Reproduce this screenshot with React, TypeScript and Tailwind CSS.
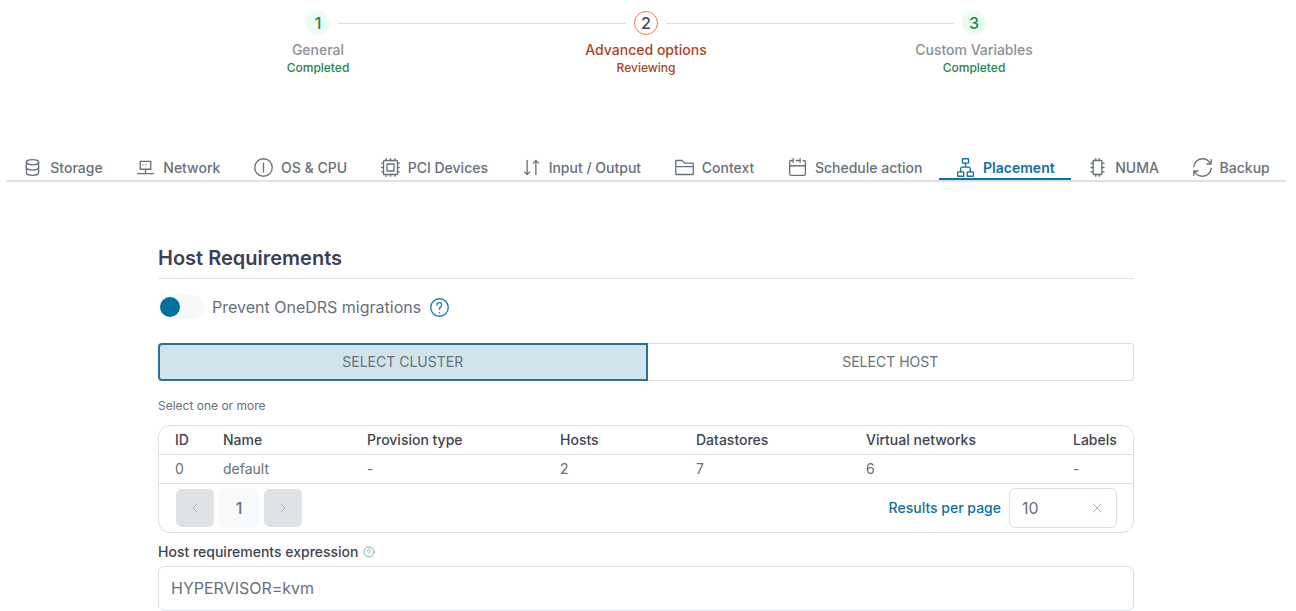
import { clsx } from "clsx";
import { ReactNode, useState } from "react";

const Icon = ({ className, children }: { className?: string; children: ReactNode }) => (
  <svg
    viewBox="0 0 24 24"
    fill="none"
    stroke="currentColor"
    strokeWidth={1.5}
    strokeLinecap="round"
    strokeLinejoin="round"
    aria-hidden="true"
    className={clsx("shrink-0", className)}
  >
    {children}
  </svg>
);

const HelpIcon = ({ className }: { className?: string }) => (
  <Icon className={className}>
    <circle cx="12" cy="12" r="10" />
    <path d="M9 9C9 5.5 14.5 5.5 14.5 9C14.5 11.5 12 11 12 14" />
    <path d="M12 18.01L12.01 17.999" />
  </Icon>
);

const steps = [
  { id: 1, label: "General", status: "Completed" },
  { id: 2, label: "Advanced options", status: "Reviewing" },
  { id: 3, label: "Custom Variables", status: "Completed" },
];

const tabs = [
  {
    id: "storage",
    label: "Storage",
    icon: (
      <>
        <path d="M5 12V18C5 18 5 21 12 21C19 21 19 18 19 18V12" />
        <path d="M5 6V12C5 12 5 15 12 15C19 15 19 12 19 12V6" />
        <path d="M12 3C19 3 19 6 19 6C19 6 19 9 12 9C5 9 5 6 5 6C5 6 5 3 12 3Z" />
      </>
    ),
  },
  {
    id: "network",
    label: "Network",
    icon: (
      <>
        <path d="M3 19H21M12 19V14M6 5H18V14H6Z" />
        <path d="M9 9.01L9.01 8.999M12.5 9.01L12.51 8.999" />
      </>
    ),
  },
  {
    id: "booting",
    label: "OS & CPU",
    icon: (
      <>
        <circle cx="12" cy="12" r="10" />
        <path d="M12 7V17" />
      </>
    ),
  },
  {
    id: "pci",
    label: "PCI Devices",
    icon: (
      <>
        <path d="M8 8H16V16H8Z" />
        <rect x="4" y="4" width="16" height="16" rx="1" />
        <path d="M7 2V4M12 2V4M17 2V4M7 20V22M12 20V22M17 20V22" />
        <path d="M2 7H4M2 12H4M2 17H4M20 7H22M20 12H22M20 17H22" />
      </>
    ),
  },
  {
    id: "io",
    label: "Input / Output",
    icon: (
      <>
        <path d="M17 20V4M17 4L20 7M17 4L14 7" />
        <path d="M7 4V20M7 20L10 17M7 20L4 17" />
      </>
    ),
  },
  {
    id: "context",
    label: "Context",
    icon: (
      <path d="M2 11V4.6C2 4.27 2.27 4 2.6 4H8.78C8.92 4 9.06 4.05 9.17 4.14L12.33 6.86C12.44 6.95 12.58 7 12.72 7H21.4C21.73 7 22 7.27 22 7.6V11M2 11V19.4C2 19.73 2.27 20 2.6 20H21.4C21.73 20 22 19.73 22 19.4V11M2 11H22" />
    ),
  },
  {
    id: "schedule",
    label: "Schedule action",
    icon: (
      <path d="M15 4V2M15 4V6M15 4H10.5M3 10V19C3 20.1 3.9 21 5 21H19C20.1 21 21 20.1 21 19V10H3ZM3 10V6C3 4.9 3.9 4 5 4H7M7 2V6M21 10V6C21 4.9 20.1 4 19 4H18.5" />
    ),
  },
  {
    id: "placement",
    label: "Placement",
    icon: (
      <>
        <rect x="8.5" y="2" width="7" height="5" rx=".6" />
        <rect x="3" y="17" width="7" height="5" rx=".6" />
        <rect x="14" y="17" width="7" height="5" rx=".6" />
        <path d="M6.5 17V13.5C6.5 12.4 7.4 11.5 8.5 11.5H15.5C16.6 11.5 17.5 12.4 17.5 13.5V17M12 11.5V7" />
      </>
    ),
  },
  {
    id: "numa",
    label: "NUMA",
    icon: (
      <>
        <rect x="7" y="4" width="10" height="16" rx=".6" />
        <path d="M10 2V4M14 2V4M10 20V22M14 20V22" />
        <path d="M4.5 7H7M4.5 12H7M4.5 17H7M17 7H19.5M17 12H19.5M17 17H19.5" />
      </>
    ),
  },
  {
    id: "backup",
    label: "Backup",
    icon: (
      <>
        <path d="M21.17 8C19.62 4.47 16.1 2 12 2C6.81 2 2.55 5.95 2.05 11M17 8H21.4C21.73 8 22 7.73 22 7.4V3" />
        <path d="M2.88 16C4.42 19.53 7.95 22 12.05 22C17.23 22 21.5 18.05 22 13M7.05 16H2.65C2.32 16 2.05 16.27 2.05 16.6V21" />
      </>
    ),
  },
];

const columns = [
  { label: "ID", width: "w-[48px]" },
  { label: "Name", width: "w-[144px]" },
  { label: "Provision type", width: "w-[193px]" },
  { label: "Hosts", width: "w-[136px]" },
  { label: "Datastores", width: "w-[170px]" },
  { label: "Virtual networks", width: "w-[207px]" },
  { label: "Labels", width: "w-[76px]" },
];

const clusters = [["0", "default", "-", "2", "7", "6", "-"]];

const Stepper = () => (
  <ol className="mx-auto flex w-full max-w-[984px]">
    {steps.map(({ id, label, status }, index) => {
      const active = status === "Reviewing";
      return (
        <li key={id} className="relative flex flex-1 flex-col items-center font-medium">
          {index > 0 && (
            <span className="absolute top-3 right-[calc(50%+20px)] left-[calc(-50%+20px)] h-px bg-[#dcdfe3]" />
          )}
          <span
            className={clsx(
              "flex size-6 items-center justify-center rounded-full text-base",
              active ? "border border-[#f9734a] text-[#40444f]" : "bg-[#e9fdf2] text-[#22854a]"
            )}
          >
            {id}
          </span>
          <span
            className={clsx(
              "mt-[5px] text-sm leading-5",
              active ? "text-[#ad4420]" : "text-[#8c9196]"
            )}
          >
            {label}
          </span>
          <span className={clsx("text-xs", active ? "text-[#ad4420]" : "text-[#22854a]")}>
            {status}
          </span>
        </li>
      );
    })}
  </ol>
);

const HostRequirements = () => {
  const [target, setTarget] = useState("cluster");
  const [preventMigrations, setPreventMigrations] = useState(false);
  const [expression, setExpression] = useState("HYPERVISOR=kvm");

  return (
    <section className="mx-auto w-full max-w-[976px]">
      <h2 className="border-b border-[#dcdfe3] pb-1.5 text-xl leading-7 font-semibold text-[#3e3e58]">
        Host Requirements
      </h2>

      <div className="mt-4 flex items-center gap-2">
        <label className="flex cursor-pointer items-center gap-2">
          <input
            type="checkbox"
            className="peer sr-only"
            checked={preventMigrations}
            onChange={(e) => setPreventMigrations(e.target.checked)}
          />
          <span className="flex h-6 w-[46px] items-center rounded-full bg-[#f6f8f9] px-0.5 peer-checked:justify-end">
            <span className="size-5 rounded-full bg-[#00719c]" />
          </span>
          <span>Prevent OneDRS migrations</span>
        </label>
        <button type="button" aria-label="Help" className="text-[#1b7ba6]">
          <HelpIcon className="size-[21px]" />
        </button>
      </div>

      <div className="mt-6 flex h-[38px] text-sm">
        {["cluster", "host"].map((item) => (
          <button
            key={item}
            type="button"
            aria-pressed={target === item}
            onClick={() => setTarget(item)}
            className={clsx(
              "flex-1 uppercase first:rounded-l last:rounded-r last:border-l-0",
              target === item ? "border-2 border-[#2a6f97] bg-[#d0e4eb]" : "border border-[#dcdfe3]"
            )}
          >
            Select {item}
          </button>
        ))}
      </div>

      <p className="mt-4 text-xs leading-[18px]">Select one or more</p>

      <div className="mt-[10px] rounded-xl border border-[#dcdfe3]">
        <table className="w-full table-fixed text-left text-sm">
          <thead className="text-[#3f4450]">
            <tr className="h-7 border-b border-[#dcdfe3]">
              {columns.map(({ label, width }) => (
                <th key={label} className={clsx("pl-4 font-medium whitespace-nowrap", width)}>
                  {label}
                </th>
              ))}
            </tr>
          </thead>
          <tbody>
            {clusters.map((row) => (
              <tr key={row[0]} className="h-[29px] border-b border-[#dcdfe3]">
                {row.map((cell, index) => (
                  <td key={index} className="pl-4">
                    {cell}
                  </td>
                ))}
              </tr>
            ))}
          </tbody>
        </table>

        <div className="flex items-center justify-between px-4 py-1">
          <nav aria-label="Pagination" className="flex gap-1">
            <button
              type="button"
              disabled
              aria-label="Previous page"
              className="flex size-10 items-center justify-center rounded-md border border-white bg-[#dfe3e6] bg-clip-padding text-[#a9aeb3]"
            >
              <Icon className="size-4">
                <path d="M15 6L9 12L15 18" />
              </Icon>
            </button>
            <button type="button" className="size-10 rounded-md bg-[#f8f9fa] font-medium">
              1
            </button>
            <button
              type="button"
              disabled
              aria-label="Next page"
              className="flex size-10 items-center justify-center rounded-md border border-white bg-[#dfe3e6] bg-clip-padding text-[#a9aeb3]"
            >
              <Icon className="size-4">
                <path d="M9 6L15 12L9 18" />
              </Icon>
            </button>
          </nav>
          <div className="flex items-center gap-2">
            <label htmlFor="page-size" className="text-sm font-medium text-[#11709f]">
              Results per page
            </label>
            <div className="relative">
              <select
                id="page-size"
                defaultValue="10"
                className="h-10 w-[108px] appearance-none rounded-md border border-[#dcdfe3] bg-white px-3"
              >
                <option>10</option>
                <option>20</option>
                <option>50</option>
              </select>
              <button
                type="button"
                aria-label="Clear"
                className="absolute top-3 right-3 text-[#a9aeb3]"
              >
                <Icon className="size-4">
                  <path d="M6 6L18 18M18 6L6 18" />
                </Icon>
              </button>
            </div>
          </div>
        </div>
      </div>

      <div className="mt-2 flex items-center gap-1">
        <label htmlFor="expression" className="text-sm leading-[22px] font-medium text-[#3f4450]">
          Host requirements expression
        </label>
        <HelpIcon className="size-3 text-[#3f9c98]" />
      </div>
      <input
        id="expression"
        type="text"
        value={expression}
        onChange={(e) => setExpression(e.target.value)}
        className="mt-[3px] h-[45px] w-full rounded-md border border-[#dcdfe3] px-3 outline-none"
      />
    </section>
  );
};

const App = () => {
  const [selected, setSelected] = useState("placement");

  return (
    <main className="bg-white pt-[11px] pr-[10px] pl-1.5 font-['Inter',sans-serif] text-base text-[#68707a]">
      <Stepper />

      <div role="tablist" className="mt-[81px] flex border-b-2 border-[#dee2e4]">
        {tabs.map(({ id, label, icon }) => (
          <button
            key={id}
            type="button"
            role="tab"
            aria-selected={selected === id}
            onClick={() => setSelected(id)}
            className={clsx(
              "flex h-[23px] flex-auto items-center justify-center gap-[7px] border-b-2 px-4 text-sm whitespace-nowrap",
              selected === id
                ? "border-[#0c73a3] font-semibold text-[#11709f]"
                : "border-transparent font-medium"
            )}
          >
            <Icon className="size-[21px]">{icon}</Icon>
            {label}
          </button>
        ))}
      </div>

      <div className="mt-[62px]">
        <HostRequirements />
      </div>
    </main>
  );
};

export default App;
